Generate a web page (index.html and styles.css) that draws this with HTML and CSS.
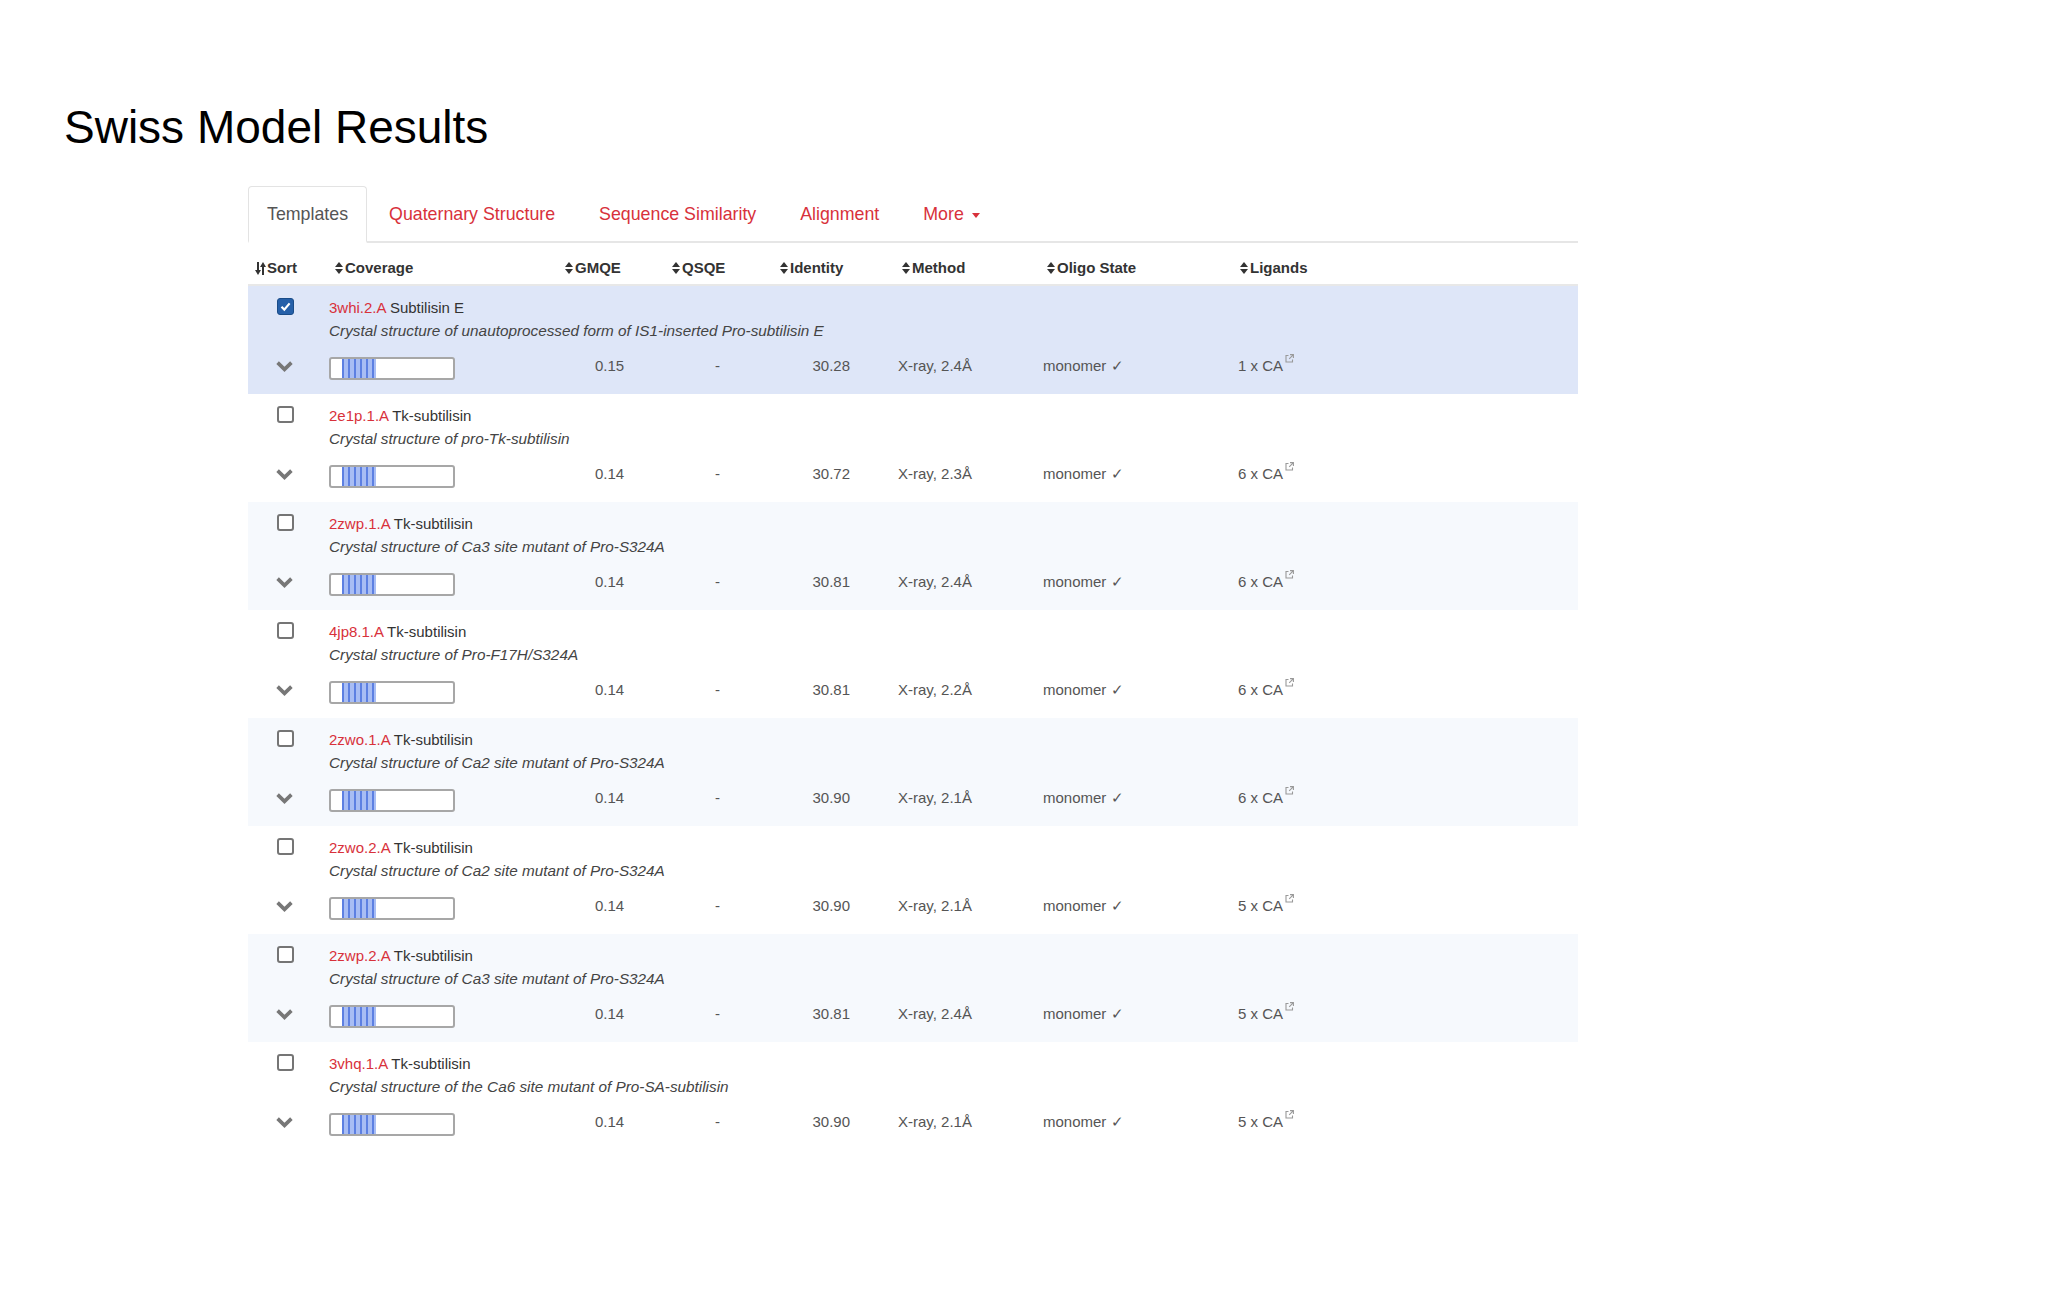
FILE: index.html
```html
<!DOCTYPE html>
<html lang="en">
<head>
<meta charset="utf-8">
<title>Swiss Model Results</title>
<link rel="stylesheet" href="styles.css">
</head>
<body>
<div class="page">
  <h1 class="title">Swiss Model Results</h1>

  <div class="panel">
    <ul class="tabs">
      <li class="tab active"><a>Templates</a></li>
      <li class="tab"><a>Quaternary Structure</a></li>
      <li class="tab"><a>Sequence Similarity</a></li>
      <li class="tab"><a>Alignment</a></li>
      <li class="tab"><a>More <span class="caret"></span></a></li>
    </ul>

    <div class="thead cols">
      <div class="th th-sort"><svg class="ico-sort" width="11" height="13" viewBox="0 0 11 13"><rect x="2" y="0" width="2" height="9"/><polygon points="0,8 6,8 3,13"/><rect x="7" y="4" width="2" height="9"/><polygon points="5,5 11,5 8,0"/></svg>Sort</div>
      <div class="th th-cov"><svg class="ico-ud" width="8" height="12" viewBox="0 0 8 12"><polygon points="0,5 4,0 8,5"/><polygon points="0,7 8,7 4,12"/></svg>Coverage</div>
      <div class="th th-n"><svg class="ico-ud" width="8" height="12" viewBox="0 0 8 12"><polygon points="0,5 4,0 8,5"/><polygon points="0,7 8,7 4,12"/></svg>GMQE</div>
      <div class="th th-n"><svg class="ico-ud" width="8" height="12" viewBox="0 0 8 12"><polygon points="0,5 4,0 8,5"/><polygon points="0,7 8,7 4,12"/></svg>QSQE</div>
      <div class="th th-n"><svg class="ico-ud" width="8" height="12" viewBox="0 0 8 12"><polygon points="0,5 4,0 8,5"/><polygon points="0,7 8,7 4,12"/></svg>Identity</div>
      <div class="th th-n"><svg class="ico-ud" width="8" height="12" viewBox="0 0 8 12"><polygon points="0,5 4,0 8,5"/><polygon points="0,7 8,7 4,12"/></svg>Method</div>
      <div class="th th-n"><svg class="ico-ud" width="8" height="12" viewBox="0 0 8 12"><polygon points="0,5 4,0 8,5"/><polygon points="0,7 8,7 4,12"/></svg>Oligo State</div>
      <div class="th th-n"><svg class="ico-ud" width="8" height="12" viewBox="0 0 8 12"><polygon points="0,5 4,0 8,5"/><polygon points="0,7 8,7 4,12"/></svg>Ligands</div>
    </div>

    <div class="tbody" id="tbody">
      <div class="trow selected">
        <div class="r-top">
          <span class="cb checked"><svg width="13" height="13" viewBox="0 0 13 13"><path d="M2.5 6.8 L5.3 9.6 L10.6 3.4" fill="none" stroke="#fff" stroke-width="2.2"/></svg></span>
          <div class="info"><div class="name"><a class="pdb">3whi.2.A</a> Subtilisin E</div><div class="desc">Crystal structure of unautoprocessed form of IS1-inserted Pro-subtilisin E</div></div>
        </div>
        <div class="r-bot cols">
          <span class="c-chev"><svg width="17" height="11" viewBox="0 0 17 11"><polyline points="1.6,1.6 8.5,8.4 15.4,1.6" fill="none" stroke="#777" stroke-width="3.6"/></svg></span>
          <span class="c-bar"><span class="bar"><span class="fill"></span></span></span>
          <span class="c-gmqe">0.15</span>
          <span class="c-qsqe">-</span>
          <span class="c-ident">30.28</span>
          <span class="c-meth">X-ray, 2.4Å</span>
          <span class="c-oligo">monomer ✓</span>
          <span class="c-lig">1 x CA<svg class="ext" width="9" height="9" viewBox="0 0 9 9"><path d="M3.5 1.5H1v6.5h6.5V5.5" fill="none" stroke="#999" stroke-width="1.1"/><path d="M5 0.6h3.4V4 M8.4 0.6 L4.2 4.8" fill="none" stroke="#999" stroke-width="1.1"/></svg></span>
        </div>
      </div>

      <div class="trow">
        <div class="r-top">
          <span class="cb"></span>
          <div class="info"><div class="name"><a class="pdb">2e1p.1.A</a> Tk-subtilisin</div><div class="desc">Crystal structure of pro-Tk-subtilisin</div></div>
        </div>
        <div class="r-bot cols">
          <span class="c-chev"><svg width="17" height="11" viewBox="0 0 17 11"><polyline points="1.6,1.6 8.5,8.4 15.4,1.6" fill="none" stroke="#777" stroke-width="3.6"/></svg></span>
          <span class="c-bar"><span class="bar"><span class="fill"></span></span></span>
          <span class="c-gmqe">0.14</span>
          <span class="c-qsqe">-</span>
          <span class="c-ident">30.72</span>
          <span class="c-meth">X-ray, 2.3Å</span>
          <span class="c-oligo">monomer ✓</span>
          <span class="c-lig">6 x CA<svg class="ext" width="9" height="9" viewBox="0 0 9 9"><path d="M3.5 1.5H1v6.5h6.5V5.5" fill="none" stroke="#999" stroke-width="1.1"/><path d="M5 0.6h3.4V4 M8.4 0.6 L4.2 4.8" fill="none" stroke="#999" stroke-width="1.1"/></svg></span>
        </div>
      </div>

      <div class="trow">
        <div class="r-top">
          <span class="cb"></span>
          <div class="info"><div class="name"><a class="pdb">2zwp.1.A</a> Tk-subtilisin</div><div class="desc">Crystal structure of Ca3 site mutant of Pro-S324A</div></div>
        </div>
        <div class="r-bot cols">
          <span class="c-chev"><svg width="17" height="11" viewBox="0 0 17 11"><polyline points="1.6,1.6 8.5,8.4 15.4,1.6" fill="none" stroke="#777" stroke-width="3.6"/></svg></span>
          <span class="c-bar"><span class="bar"><span class="fill"></span></span></span>
          <span class="c-gmqe">0.14</span>
          <span class="c-qsqe">-</span>
          <span class="c-ident">30.81</span>
          <span class="c-meth">X-ray, 2.4Å</span>
          <span class="c-oligo">monomer ✓</span>
          <span class="c-lig">6 x CA<svg class="ext" width="9" height="9" viewBox="0 0 9 9"><path d="M3.5 1.5H1v6.5h6.5V5.5" fill="none" stroke="#999" stroke-width="1.1"/><path d="M5 0.6h3.4V4 M8.4 0.6 L4.2 4.8" fill="none" stroke="#999" stroke-width="1.1"/></svg></span>
        </div>
      </div>

      <div class="trow">
        <div class="r-top">
          <span class="cb"></span>
          <div class="info"><div class="name"><a class="pdb">4jp8.1.A</a> Tk-subtilisin</div><div class="desc">Crystal structure of Pro-F17H/S324A</div></div>
        </div>
        <div class="r-bot cols">
          <span class="c-chev"><svg width="17" height="11" viewBox="0 0 17 11"><polyline points="1.6,1.6 8.5,8.4 15.4,1.6" fill="none" stroke="#777" stroke-width="3.6"/></svg></span>
          <span class="c-bar"><span class="bar"><span class="fill"></span></span></span>
          <span class="c-gmqe">0.14</span>
          <span class="c-qsqe">-</span>
          <span class="c-ident">30.81</span>
          <span class="c-meth">X-ray, 2.2Å</span>
          <span class="c-oligo">monomer ✓</span>
          <span class="c-lig">6 x CA<svg class="ext" width="9" height="9" viewBox="0 0 9 9"><path d="M3.5 1.5H1v6.5h6.5V5.5" fill="none" stroke="#999" stroke-width="1.1"/><path d="M5 0.6h3.4V4 M8.4 0.6 L4.2 4.8" fill="none" stroke="#999" stroke-width="1.1"/></svg></span>
        </div>
      </div>

      <div class="trow">
        <div class="r-top">
          <span class="cb"></span>
          <div class="info"><div class="name"><a class="pdb">2zwo.1.A</a> Tk-subtilisin</div><div class="desc">Crystal structure of Ca2 site mutant of Pro-S324A</div></div>
        </div>
        <div class="r-bot cols">
          <span class="c-chev"><svg width="17" height="11" viewBox="0 0 17 11"><polyline points="1.6,1.6 8.5,8.4 15.4,1.6" fill="none" stroke="#777" stroke-width="3.6"/></svg></span>
          <span class="c-bar"><span class="bar"><span class="fill"></span></span></span>
          <span class="c-gmqe">0.14</span>
          <span class="c-qsqe">-</span>
          <span class="c-ident">30.90</span>
          <span class="c-meth">X-ray, 2.1Å</span>
          <span class="c-oligo">monomer ✓</span>
          <span class="c-lig">6 x CA<svg class="ext" width="9" height="9" viewBox="0 0 9 9"><path d="M3.5 1.5H1v6.5h6.5V5.5" fill="none" stroke="#999" stroke-width="1.1"/><path d="M5 0.6h3.4V4 M8.4 0.6 L4.2 4.8" fill="none" stroke="#999" stroke-width="1.1"/></svg></span>
        </div>
      </div>

      <div class="trow">
        <div class="r-top">
          <span class="cb"></span>
          <div class="info"><div class="name"><a class="pdb">2zwo.2.A</a> Tk-subtilisin</div><div class="desc">Crystal structure of Ca2 site mutant of Pro-S324A</div></div>
        </div>
        <div class="r-bot cols">
          <span class="c-chev"><svg width="17" height="11" viewBox="0 0 17 11"><polyline points="1.6,1.6 8.5,8.4 15.4,1.6" fill="none" stroke="#777" stroke-width="3.6"/></svg></span>
          <span class="c-bar"><span class="bar"><span class="fill"></span></span></span>
          <span class="c-gmqe">0.14</span>
          <span class="c-qsqe">-</span>
          <span class="c-ident">30.90</span>
          <span class="c-meth">X-ray, 2.1Å</span>
          <span class="c-oligo">monomer ✓</span>
          <span class="c-lig">5 x CA<svg class="ext" width="9" height="9" viewBox="0 0 9 9"><path d="M3.5 1.5H1v6.5h6.5V5.5" fill="none" stroke="#999" stroke-width="1.1"/><path d="M5 0.6h3.4V4 M8.4 0.6 L4.2 4.8" fill="none" stroke="#999" stroke-width="1.1"/></svg></span>
        </div>
      </div>

      <div class="trow">
        <div class="r-top">
          <span class="cb"></span>
          <div class="info"><div class="name"><a class="pdb">2zwp.2.A</a> Tk-subtilisin</div><div class="desc">Crystal structure of Ca3 site mutant of Pro-S324A</div></div>
        </div>
        <div class="r-bot cols">
          <span class="c-chev"><svg width="17" height="11" viewBox="0 0 17 11"><polyline points="1.6,1.6 8.5,8.4 15.4,1.6" fill="none" stroke="#777" stroke-width="3.6"/></svg></span>
          <span class="c-bar"><span class="bar"><span class="fill"></span></span></span>
          <span class="c-gmqe">0.14</span>
          <span class="c-qsqe">-</span>
          <span class="c-ident">30.81</span>
          <span class="c-meth">X-ray, 2.4Å</span>
          <span class="c-oligo">monomer ✓</span>
          <span class="c-lig">5 x CA<svg class="ext" width="9" height="9" viewBox="0 0 9 9"><path d="M3.5 1.5H1v6.5h6.5V5.5" fill="none" stroke="#999" stroke-width="1.1"/><path d="M5 0.6h3.4V4 M8.4 0.6 L4.2 4.8" fill="none" stroke="#999" stroke-width="1.1"/></svg></span>
        </div>
      </div>

      <div class="trow">
        <div class="r-top">
          <span class="cb"></span>
          <div class="info"><div class="name"><a class="pdb">3vhq.1.A</a> Tk-subtilisin</div><div class="desc">Crystal structure of the Ca6 site mutant of Pro-SA-subtilisin</div></div>
        </div>
        <div class="r-bot cols">
          <span class="c-chev"><svg width="17" height="11" viewBox="0 0 17 11"><polyline points="1.6,1.6 8.5,8.4 15.4,1.6" fill="none" stroke="#777" stroke-width="3.6"/></svg></span>
          <span class="c-bar"><span class="bar"><span class="fill"></span></span></span>
          <span class="c-gmqe">0.14</span>
          <span class="c-qsqe">-</span>
          <span class="c-ident">30.90</span>
          <span class="c-meth">X-ray, 2.1Å</span>
          <span class="c-oligo">monomer ✓</span>
          <span class="c-lig">5 x CA<svg class="ext" width="9" height="9" viewBox="0 0 9 9"><path d="M3.5 1.5H1v6.5h6.5V5.5" fill="none" stroke="#999" stroke-width="1.1"/><path d="M5 0.6h3.4V4 M8.4 0.6 L4.2 4.8" fill="none" stroke="#999" stroke-width="1.1"/></svg></span>
        </div>
      </div>
    </div>
  </div>
</div>
</body>
</html>
```

FILE: styles.css
```css
* { box-sizing: border-box; }

html, body {
  margin: 0;
  padding: 0;
  background: #ffffff;
  font-family: "Liberation Sans", Arial, sans-serif;
  color: #333;
}

.page {
  width: 2048px;
  min-height: 1289px;
  padding-top: 104px;
}

.title {
  margin: 0 0 0 64px;
  font-size: 46px;
  line-height: 46px;
  font-weight: normal;
  color: #000;
}

.panel {
  margin: 36px 0 0 248px;
  width: 1330px;
}

/* tabs */
.tabs {
  list-style: none;
  margin: 0;
  padding: 0;
  display: flex;
  border-bottom: 2px solid #e6e6e6;
}

.tab {
  margin: 0 0 -2px 0;
}

.tab a {
  display: block;
  padding: 17px 21px;
  border: 1px solid transparent;
  border-bottom-width: 2px;
  border-radius: 4px 4px 0 0;
  font-size: 17.8px;
  line-height: 20px;
  color: #d8313b;
}

.tab.active a {
  padding-left: 18px;
  padding-right: 18px;
  color: #555;
  border-color: #e3e3e3;
  border-bottom-color: #fff;
  background: #fff;
}

.caret {
  display: inline-block;
  width: 0;
  height: 0;
  margin-left: 3px;
  vertical-align: middle;
  border-top: 5px solid #d8313b;
  border-left: 4px solid transparent;
  border-right: 4px solid transparent;
}

/* shared column grid */
.cols {
  display: grid;
  grid-template-columns: 81px 231px 108px 108px 122px 145px 193px 1fr;
}

/* header */
.thead {
  padding: 15px 0 6px;
  border-bottom: 2px solid #e8e8e8;
}

.th {
  font-size: 15px;
  line-height: 20px;
  font-weight: bold;
  color: #333;
  display: flex;
  align-items: center;
  padding-left: 4px;
  white-space: nowrap;
}

.th svg { fill: #333; flex: none; }
.th .ico-ud { margin-right: 2px; }
.th .ico-sort { margin-right: 1px; }
.th-sort { padding-left: 7px; }
.th-cov { padding-left: 6px; }
.th-n:nth-child(3) { padding-left: 5px; }

/* rows */
.trow {
  padding: 11px 0 13px;
  height: 108px;
}

.trow:nth-child(odd) { background: #f6f9fd; }
.trow.selected { background: #dee6f8; }

.r-top {
  display: grid;
  grid-template-columns: 81px 1fr;
}

.cb {
  margin: 1px 0 0 29px;
  width: 17px;
  height: 17px;
  border: 2px solid #757575;
  border-radius: 3px;
  background: #fff;
  display: flex;
  align-items: center;
  justify-content: center;
}

.cb.checked {
  background: #2660a9;
  border: 1px solid #1a4c88;
}

.info {
  font-size: 15px;
  line-height: 21px;
}

.name { color: #333; }
.pdb { color: #d8313b; }

.desc {
  margin-top: 2px;
  font-size: 15.3px;
  font-style: italic;
  color: #444;
}

.r-bot {
  margin-top: 16px;
  height: 23px;
  font-size: 15px;
  line-height: 18px;
  color: #555;
  white-space: nowrap;
}

.c-chev {
  padding: 4px 0 0 28px;
  line-height: 0;
}

.bar {
  display: block;
  width: 126px;
  height: 23px;
  border: 2px solid #a7a7a7;
  border-radius: 3px;
  background: #fff;
  padding-left: 11px;
}

.fill {
  display: block;
  width: 34px;
  height: 100%;
  background: repeating-linear-gradient(90deg, #5d80e2 0 2.5px, #a8bdf4 2.5px 6px);
}

.c-gmqe { padding-left: 35px; }
.c-qsqe { padding-left: 47px; }
.c-ident { text-align: right; padding-right: 48px; }
.c-meth { padding-left: 0; }
.c-oligo { padding-left: 0; }
.c-lig { padding-left: 2px; }

.ext {
  vertical-align: top;
  margin: -3px 0 0 2px;
}
```
